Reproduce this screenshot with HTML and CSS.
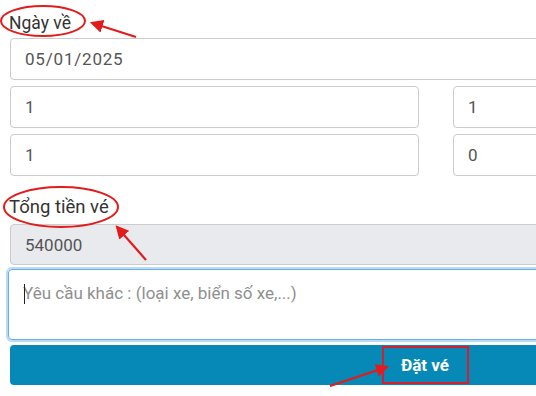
FILE: index.html
```html
<!DOCTYPE html>
<html lang="vi">
<head>
    <meta charset="UTF-8">
    <meta name="viewport" content="width=device-width, initial-scale=1.0">
    <title>Đặt vé</title>
    <link rel="stylesheet" href="styles.css">
</head>
<body>
    <form class="booking">
        <label class="field-label">Ngày về</label>
        <div class="input date">05/01/2025</div>
        <div class="row">
            <div class="input">1</div>
            <div class="input">1</div>
        </div>
        <div class="row">
            <div class="input">1</div>
            <div class="input">0</div>
        </div>
        <label class="field-label total">Tổng tiền vé</label>
        <div class="input readonly">540000</div>
        <div class="note">
            <span class="caret"></span>
            <span class="placeholder">Yêu cầu khác : (loại xe, biển số xe,...)</span>
        </div>
        <button type="button" class="submit">Đặt vé</button>
    </form>

    <!-- red marks drawn over the screenshot -->
    <svg class="marks" width="536" height="396" viewBox="0 0 536 396">
        <defs>
            <marker id="head" markerWidth="6" markerHeight="6" refX="5" refY="3" orient="auto" markerUnits="strokeWidth">
                <path d="M0,0 L6,3 L0,6 z" fill="#e41b1b"/>
            </marker>
        </defs>
        <ellipse cx="43" cy="21" rx="42" ry="15" fill="none" stroke="#e41b1b" stroke-width="2"/>
        <line x1="136" y1="37" x2="92" y2="23" stroke="#e41b1b" stroke-width="2.2" marker-end="url(#head)"/>
        <ellipse cx="61" cy="207" rx="57" ry="20" fill="none" stroke="#e41b1b" stroke-width="2"/>
        <line x1="146" y1="260" x2="117" y2="227" stroke="#e41b1b" stroke-width="2.2" marker-end="url(#head)"/>
        <rect x="383" y="347" width="85" height="36" fill="none" stroke="#d4202e" stroke-width="2"/>
        <line x1="330" y1="386" x2="387" y2="367" stroke="#e41b1b" stroke-width="2.2" marker-end="url(#head)"/>
    </svg>
</body>
</html>
```

FILE: styles.css
```css
html, body {
    margin: 0;
    background: #fff;
    overflow: hidden;
}
body {
    position: relative;
    width: 536px;
    height: 396px;
    font-family: Roboto, "Liberation Sans", sans-serif;
    color: #333;
}
.booking {
    width: 830px;
    padding: 13px 0 0 10px;
    display: flex;
    flex-direction: column;
}
.field-label {
    font-size: 17.5px;
    line-height: 20px;
    margin-left: -1px;
    margin-bottom: 5px;
}
.field-label.total {
    font-size: 18.5px;
    margin-top: 21px;
    margin-bottom: 7px;
}
.input {
    box-sizing: border-box;
    height: 42px;
    padding: 0 14px;
    border: 1px solid #ccc;
    border-radius: 4px;
    font-size: 17px;
    line-height: 40px;
    color: #555;
    background: #fff;
}
.input.date {
    letter-spacing: 0.8px;
}
.row {
    display: grid;
    grid-template-columns: 409px 1fr;
    gap: 34px;
    margin-top: 6px;
}
.input.readonly {
    background: #e9eaed;
    height: 41px;
}
.note {
    box-sizing: border-box;
    position: relative;
    height: 71px;
    margin: 4px 0 0 -2px;
    padding: 11px 14px;
    border: 1px solid #66afe9;
    border-radius: 4px;
    box-shadow: 0 0 0 2px rgba(102, 175, 233, 0.45);
    font-size: 17px;
    line-height: 24px;
}
.placeholder {
    color: #8f8f8f;
}
.caret {
    position: absolute;
    left: 15px;
    top: 14px;
    width: 1px;
    height: 20px;
    background: #222;
}
.submit {
    height: 40px;
    margin-top: 5px;
    border: 0;
    border-radius: 4px;
    background: #0689b6;
    color: #fff;
    font-family: Roboto, "Liberation Sans", sans-serif;
    font-size: 17px;
    font-weight: bold;
}
.marks {
    position: absolute;
    left: 0;
    top: 0;
    pointer-events: none;
}
```
